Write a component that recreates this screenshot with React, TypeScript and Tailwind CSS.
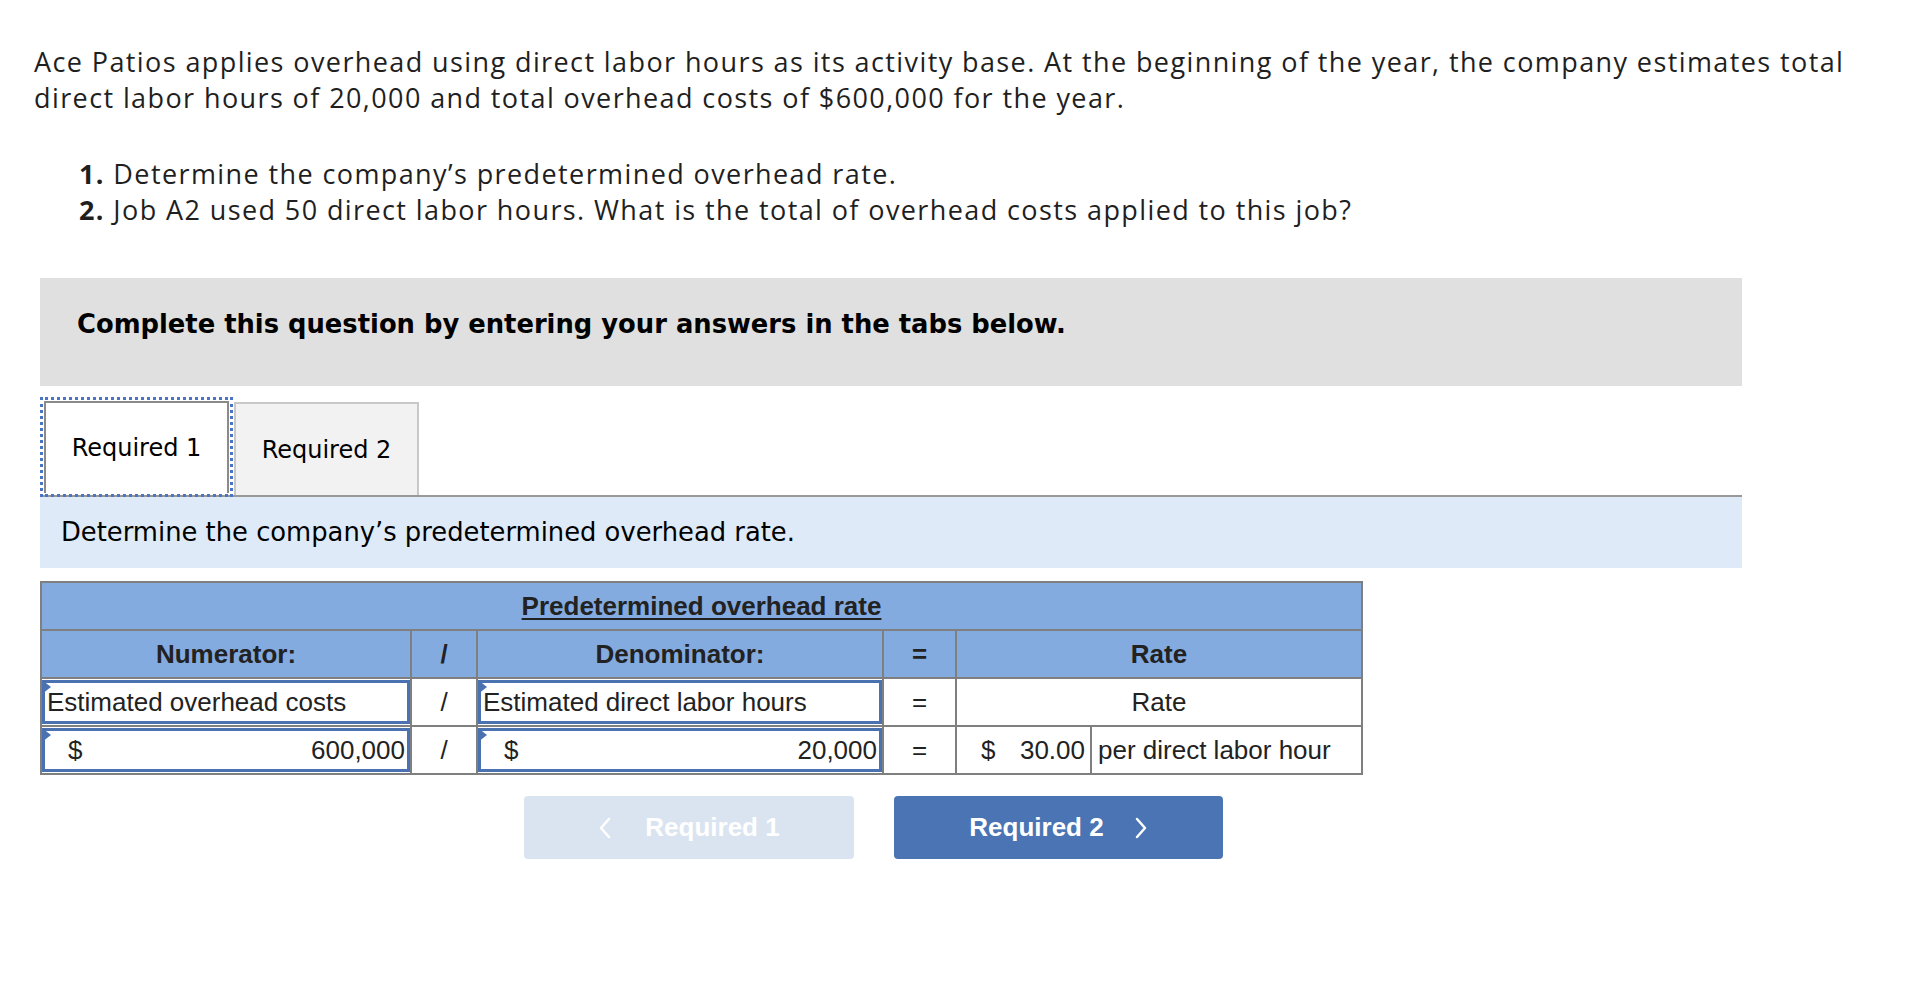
import React from "react";

const cell = "border-2 border-[#7f7f7f] h-[48px] p-0";

function Flag() {
  return (
    <span className="absolute -left-[3px] -top-[3px] h-0 w-0 border-y-[7px] border-l-[9px] border-y-transparent border-l-[#4a72b2]" />
  );
}

function InputCell({ children, className = "" }: { children: React.ReactNode; className?: string }) {
  return (
    <td className={cell}>
      <div className={`relative flex h-[44px] items-center border-[3px] border-[#4a72b2] bg-white ${className}`}>
        <Flag />
        {children}
      </div>
    </td>
  );
}

function Chevron({ dir }: { dir: "left" | "right" }) {
  return (
    <svg width="14" height="24" viewBox="0 0 14 24" fill="none" stroke="currentColor" strokeWidth="2.5" strokeLinecap="round" strokeLinejoin="round">
      {dir === "left" ? <path d="M11 3 L3 12 L11 21" /> : <path d="M3 3 L11 12 L3 21" />}
    </svg>
  );
}

export default function App() {
  return (
    <div className="min-h-screen bg-white text-[#1f1f1f]">
      <div className="pl-[34px] pt-[44px] font-['Open_Sans',sans-serif] text-[27px] leading-[36px] tracking-[1.4px]">
        <p>
          Ace Patios applies overhead using direct labor hours as its activity base. At the beginning of the year, the company estimates total
          <br />
          direct labor hours of 20,000 and total overhead costs of $600,000 for the year.
        </p>
        <ol className="mt-[40px] pl-[45px]">
          <li>
            <strong>1.</strong> Determine the company’s predetermined overhead rate.
          </li>
          <li>
            <strong>2.</strong> Job A2 used 50 direct labor hours. What is the total of overhead costs applied to this job?
          </li>
        </ol>
      </div>

      <div className="ml-[40px] mt-[50px] w-[1702px]">
        <div className="flex h-[108px] items-center bg-[#e0e0e0] pl-[37px] pb-[16px] font-['DejaVu_Sans',sans-serif] text-[25.8px] font-bold text-black">
          Complete this question by entering your answers in the tabs below.
        </div>

        <div className="mt-[11px] flex items-end border-b-2 border-[#999] font-['DejaVu_Sans',sans-serif] text-[24px] text-black">
          <div className="relative z-10 -mb-[2px] h-[100px] w-[193px] border-[3px] border-dotted border-[#4a74c4] p-px">
            <div className="flex h-full items-center justify-center border-2 border-b-0 border-[#8a8a8a] bg-white">Required 1</div>
          </div>
          <div className="ml-px flex h-[93px] w-[185px] items-center justify-center border-2 border-b-0 border-[#c8c8c8] bg-[#f2f2f2]">
            Required 2
          </div>
        </div>

        <div className="flex h-[71px] items-center bg-[#deeaf7] pl-[21px] font-['DejaVu_Sans',sans-serif] text-[25.8px] text-black">
          Determine the company’s predetermined overhead rate.
        </div>

        <table className="mt-[13px] w-[1321px] table-fixed border-collapse font-['Liberation_Sans',Arial,sans-serif] text-[26px] text-[#222]">
          <colgroup>
            <col className="w-[370px]" />
            <col className="w-[66px]" />
            <col className="w-[406px]" />
            <col className="w-[73px]" />
            <col className="w-[135px]" />
            <col className="w-[271px]" />
          </colgroup>
          <tbody>
            <tr className="bg-[#84abdf] font-bold">
              <td colSpan={6} className={`${cell} text-center`}>
                <span className="underline underline-offset-[3px]">Predetermined overhead rate</span>
              </td>
            </tr>
            <tr className="bg-[#84abdf] text-center font-bold">
              <td className={cell}>Numerator:</td>
              <td className={cell}>/</td>
              <td className={cell}>Denominator:</td>
              <td className={cell}>=</td>
              <td colSpan={2} className={cell}>Rate</td>
            </tr>
            <tr>
              <InputCell className="pl-[2px]">Estimated overhead costs</InputCell>
              <td className={`${cell} text-center`}>/</td>
              <InputCell className="pl-[2px]">Estimated direct labor hours</InputCell>
              <td className={`${cell} text-center`}>=</td>
              <td colSpan={2} className={`${cell} text-center`}>Rate</td>
            </tr>
            <tr>
              <InputCell className="justify-between pl-[23px] pr-[2px]">
                <span>$</span>
                <span>600,000</span>
              </InputCell>
              <td className={`${cell} text-center`}>/</td>
              <InputCell className="justify-between pl-[23px] pr-[2px]">
                <span>$</span>
                <span>20,000</span>
              </InputCell>
              <td className={`${cell} text-center`}>=</td>
              <td className={cell}>
                <div className="flex justify-between pl-[24px] pr-[5px]">
                  <span>$</span>
                  <span>30.00</span>
                </div>
              </td>
              <td className={`${cell} pl-[6px]`}>per direct labor hour</td>
            </tr>
          </tbody>
        </table>

        <div className="mt-[21px] flex gap-[40px] pl-[484px] font-['Liberation_Sans',Arial,sans-serif] text-[26px] font-bold text-white">
          <button className="flex h-[63px] w-[330px] items-center justify-center gap-[33px] rounded-[4px] bg-[#dae4f0]">
            <Chevron dir="left" />
            <span>Required 1</span>
          </button>
          <button className="flex h-[63px] w-[329px] items-center justify-center gap-[30px] rounded-[4px] bg-[#4a74b4]">
            <span>Required 2</span>
            <Chevron dir="right" />
          </button>
        </div>
      </div>
    </div>
  );
}
